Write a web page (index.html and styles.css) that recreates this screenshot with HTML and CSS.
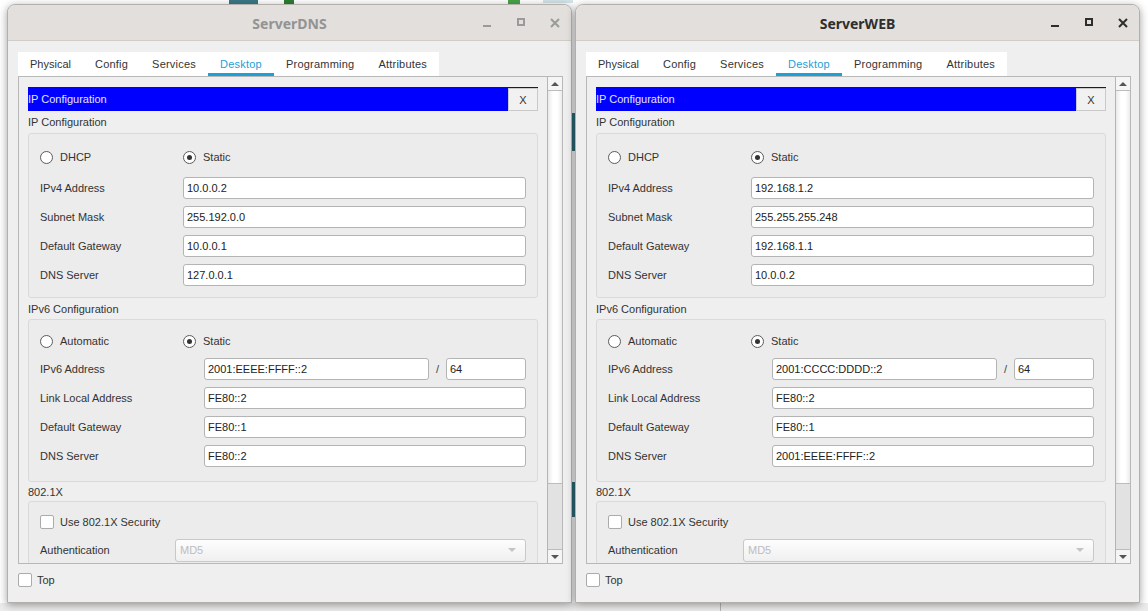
FILE: index.html
```html
<!DOCTYPE html>
<html>
<head>
<meta charset="utf-8">
<link rel="stylesheet" href="styles.css">
</head>
<body>
<div class="desk">
  <div class="bit b1"></div>
  <div class="bit b2"></div>
  <div class="bit b3"></div>
  <div class="bit b4"></div>
  <div class="bit b5"></div>
  <div class="bit b6"></div>
  <div class="bottom-strip"><div class="strip-line"></div></div>
</div>

<div class="win win-l">
  <div class="titlebar">
    <span class="title">ServerDNS</span>
    <div class="ctrls">
      <svg class="ctl" width="16" height="16" viewBox="0 0 16 16"><path d="M4 11h8" stroke="currentColor" stroke-width="2"/></svg>
      <svg class="ctl" width="16" height="16" viewBox="0 0 16 16"><rect x="5" y="4" width="6" height="6" fill="none" stroke="currentColor" stroke-width="2"/></svg>
      <svg class="ctl" width="16" height="16" viewBox="0 0 16 16"><path d="M4 4l8 8M12 4l-8 8" stroke="currentColor" stroke-width="2"/></svg>
    </div>
  </div>
  <div class="wbody">
    <div class="tabs">
      <span class="tab">Physical</span>
      <span class="tab">Config</span>
      <span class="tab">Services</span>
      <span class="tab active">Desktop</span>
      <span class="tab">Programming</span>
      <span class="tab">Attributes</span>
    </div>
    <div class="panel">
      <div class="scroll">
        <div class="bar"><span>IP Configuration</span><span class="bar-x">X</span></div>
        <div class="sec">IP Configuration</div>
        <div class="box box1">
          <div class="radios">
            <span class="opt"><span class="rad"></span>DHCP</span>
            <span class="opt"><span class="rad on"></span>Static</span>
          </div>
          <div class="row first"><span class="lbl">IPv4 Address</span><span class="inp">10.0.0.2</span></div>
          <div class="row"><span class="lbl">Subnet Mask</span><span class="inp">255.192.0.0</span></div>
          <div class="row"><span class="lbl">Default Gateway</span><span class="inp">10.0.0.1</span></div>
          <div class="row"><span class="lbl">DNS Server</span><span class="inp">127.0.0.1</span></div>
        </div>
        <div class="sec">IPv6 Configuration</div>
        <div class="box box2">
          <div class="radios">
            <span class="opt"><span class="rad"></span>Automatic</span>
            <span class="opt"><span class="rad on"></span>Static</span>
          </div>
          <div class="row first"><span class="lbl">IPv6 Address</span><span class="inp addr">2001:EEEE:FFFF::2</span><span class="slash">/</span><span class="inp pref">64</span></div>
          <div class="row"><span class="lbl">Link Local Address</span><span class="inp">FE80::2</span></div>
          <div class="row"><span class="lbl">Default Gateway</span><span class="inp">FE80::1</span></div>
          <div class="row"><span class="lbl">DNS Server</span><span class="inp">FE80::2</span></div>
        </div>
        <div class="sec sec3">802.1X</div>
        <div class="box box3">
          <div class="chkrow"><span class="chk"></span>Use 802.1X Security</div>
          <div class="row first"><span class="lbl">Authentication</span><span class="sel"><span>MD5</span><span class="sel-arrow"></span></span></div>
        </div>
      </div>
      <div class="sbar">
        <div class="sb-btn"><span class="tri-up"></span></div>
        <div class="sb-thumb"></div>
        <div class="sb-track"></div>
        <div class="sb-btn down"><span class="tri-down"></span></div>
      </div>
    </div>
    <div class="foot"><span class="chk"></span>Top</div>
  </div>
</div>

<div class="win win-r">
  <div class="titlebar">
    <span class="title">ServerWEB</span>
    <div class="ctrls">
      <svg class="ctl" width="16" height="16" viewBox="0 0 16 16"><path d="M4 11h8" stroke="currentColor" stroke-width="2"/></svg>
      <svg class="ctl" width="16" height="16" viewBox="0 0 16 16"><rect x="5" y="4" width="6" height="6" fill="none" stroke="currentColor" stroke-width="2"/></svg>
      <svg class="ctl" width="16" height="16" viewBox="0 0 16 16"><path d="M4 4l8 8M12 4l-8 8" stroke="currentColor" stroke-width="2"/></svg>
    </div>
  </div>
  <div class="wbody">
    <div class="tabs">
      <span class="tab">Physical</span>
      <span class="tab">Config</span>
      <span class="tab">Services</span>
      <span class="tab active">Desktop</span>
      <span class="tab">Programming</span>
      <span class="tab">Attributes</span>
    </div>
    <div class="panel">
      <div class="scroll">
        <div class="bar"><span>IP Configuration</span><span class="bar-x">X</span></div>
        <div class="sec">IP Configuration</div>
        <div class="box box1">
          <div class="radios">
            <span class="opt"><span class="rad"></span>DHCP</span>
            <span class="opt"><span class="rad on"></span>Static</span>
          </div>
          <div class="row first"><span class="lbl">IPv4 Address</span><span class="inp">192.168.1.2</span></div>
          <div class="row"><span class="lbl">Subnet Mask</span><span class="inp">255.255.255.248</span></div>
          <div class="row"><span class="lbl">Default Gateway</span><span class="inp">192.168.1.1</span></div>
          <div class="row"><span class="lbl">DNS Server</span><span class="inp">10.0.0.2</span></div>
        </div>
        <div class="sec">IPv6 Configuration</div>
        <div class="box box2">
          <div class="radios">
            <span class="opt"><span class="rad"></span>Automatic</span>
            <span class="opt"><span class="rad on"></span>Static</span>
          </div>
          <div class="row first"><span class="lbl">IPv6 Address</span><span class="inp addr">2001:CCCC:DDDD::2</span><span class="slash">/</span><span class="inp pref">64</span></div>
          <div class="row"><span class="lbl">Link Local Address</span><span class="inp">FE80::2</span></div>
          <div class="row"><span class="lbl">Default Gateway</span><span class="inp">FE80::1</span></div>
          <div class="row"><span class="lbl">DNS Server</span><span class="inp">2001:EEEE:FFFF::2</span></div>
        </div>
        <div class="sec sec3">802.1X</div>
        <div class="box box3">
          <div class="chkrow"><span class="chk"></span>Use 802.1X Security</div>
          <div class="row first"><span class="lbl">Authentication</span><span class="sel"><span>MD5</span><span class="sel-arrow"></span></span></div>
        </div>
      </div>
      <div class="sbar">
        <div class="sb-btn"><span class="tri-up"></span></div>
        <div class="sb-thumb"></div>
        <div class="sb-track"></div>
        <div class="sb-btn down"><span class="tri-down"></span></div>
      </div>
    </div>
    <div class="foot"><span class="chk"></span>Top</div>
  </div>
</div>
</body>
</html>
```
FILE: styles.css
```css
* { box-sizing: border-box; margin: 0; padding: 0; }

body {
  width: 1148px;
  height: 611px;
  background: #ffffff;
  font-family: "Liberation Sans", Arial, sans-serif;
  font-size: 11px;
  color: #333;
  position: relative;
  overflow: hidden;
}

/* desktop behind the windows */
.desk { position: absolute; left: 0; top: 0; width: 1148px; height: 611px; }
.bit { position: absolute; }
.b1 { left: 229px; top: 0; width: 29px; height: 4px; background: #3b7886; }
.b2 { left: 284px; top: 0; width: 10px; height: 5px; background: #2e7d32; }
.b3 { left: 508px; top: 0; width: 12px; height: 6px; background: #46a347; }
.b4 { left: 543px; top: 0; width: 30px; height: 3px; background: #d3e3e8; }
.b5 { left: 571px; top: 113px; width: 4px; height: 38px; background: #2f6f7d; }
.b6 { left: 571px; top: 482px; width: 4px; height: 35px; background: #2f6f7d; }
.bottom-strip { position: absolute; left: 0; top: 603px; width: 1148px; height: 8px; background: #ececec; }
.strip-line { position: absolute; left: 720px; top: 0; width: 1px; height: 8px; background: #b5b5b5; }

/* windows */
.win {
  position: absolute;
  top: 4px;
  width: 565px;
  height: 599px;
  background: #efefef;
  border: 1px solid #b3b0ac;
  border-radius: 8px 8px 0 0;
  box-shadow: 0 2px 8px rgba(0, 0, 0, 0.38);
  display: flex;
  flex-direction: column;
  overflow: hidden;
}
.win-l { left: 7px; }
.win-r { left: 575px; }

.titlebar {
  height: 36px;
  flex: none;
  background: #e2dfdc;
  border-bottom: 1px solid #d0cdc8;
  display: flex;
  align-items: center;
  justify-content: center;
  position: relative;
}
.title {
  font-family: "Noto Sans", "DejaVu Sans", sans-serif;
  font-weight: 700;
  font-size: 14px;
  color: #939393;
  padding-top: 1px;
}
.win-r .title { color: #2e2e2e; }

.ctrls {
  position: absolute;
  right: 8px;
  top: 0;
  height: 100%;
  display: flex;
  align-items: center;
  gap: 18px;
  color: #9a9a9a;
}
.win-r .ctrls { color: #2e2e2e; }
.ctl { display: block; }

.wbody {
  flex: 1;
  display: flex;
  flex-direction: column;
  padding: 11px 8px 0 10px;
}

/* tabs */
.tabs {
  display: flex;
  align-self: flex-start;
  background: #fff;
  height: 24px;
}
.tab {
  padding: 0 12px;
  line-height: 24px;
  position: relative;
  color: #333;
  letter-spacing: 0.22px;
}
.tab:first-child { letter-spacing: 0; }
.tab.active { color: #22a0d6; }
.tab.active::after {
  content: "";
  position: absolute;
  left: 0;
  right: 0;
  bottom: 0;
  height: 3px;
  background: #1ba0d7;
}

/* main panel */
.panel {
  height: 488px;
  flex: none;
  border: 1px solid #b8b8b8;
  display: flex;
  background: #efefef;
}
.scroll {
  flex: 1;
  padding: 10px 9px 0 9px;
  overflow: hidden;
}

.bar {
  height: 24px;
  background: #0000ff;
  color: #e4e4ff;
  display: flex;
  align-items: center;
  justify-content: space-between;
}
.bar-x {
  width: 30px;
  height: 23px;
  align-self: flex-end;
  background: #f1f1f1;
  border: 1px solid #c9c9c9;
  display: flex;
  align-items: center;
  justify-content: center;
  color: #333;
}

.sec { height: 22px; line-height: 22px; }
.sec3 { height: 19px; line-height: 21px; }

.box {
  border: 1px solid #dadada;
  border-radius: 3px;
  background: #ececec;
}
.box1 { padding: 12px 11px 11px; }
.box2 { padding: 10px 11px 14px; margin-top: -1px; }
.box3 { padding: 9px 11px 4px; }

.radios { display: flex; align-items: center; height: 22px; }
.opt { display: flex; align-items: center; gap: 7px; width: 143px; }
.rad {
  width: 13px;
  height: 13px;
  border: 1px solid #5a5a5a;
  border-radius: 50%;
  background: #fff;
  position: relative;
  flex: none;
}
.rad.on::after {
  content: "";
  position: absolute;
  left: 3px;
  top: 3px;
  width: 5px;
  height: 5px;
  border-radius: 50%;
  background: #333;
}

.row { display: flex; align-items: center; height: 22px; margin-top: 7px; }
.box1 .row.first { margin-top: 9px; }
.box2 .row.first { margin-top: 6px; }
.box3 .row.first { margin-top: 6px; }

.lbl { width: 143px; flex: none; }
.box2 .lbl { width: 164px; }
.box3 .lbl { width: 135px; }

.inp {
  flex: 1;
  height: 22px;
  background: #fff;
  border: 1px solid #b4b4b4;
  border-radius: 3px;
  padding: 0 3px;
  line-height: 20px;
  color: #222;
}
.inp.addr { flex: none; width: 225px; }
.inp.pref { flex: none; width: 80px; }
.slash { width: 17px; text-align: center; color: #444; }

.chkrow { display: flex; align-items: center; gap: 6px; height: 22px; }
.chk {
  width: 14px;
  height: 14px;
  border: 1px solid #ababab;
  border-radius: 2px;
  background: #fff;
  flex: none;
}

.sel {
  flex: 1;
  height: 23px;
  border: 1px solid #c8c8c8;
  border-radius: 3px;
  background: linear-gradient(#fdfdfd, #f0f0f0);
  color: #bdbdbd;
  padding: 0 4px;
  display: flex;
  align-items: center;
  justify-content: space-between;
}
.sel-arrow {
  width: 0;
  height: 0;
  border-left: 4px solid transparent;
  border-right: 4px solid transparent;
  border-top: 4px solid #c4c4c4;
  margin-right: 5px;
}

/* scrollbar */
.sbar {
  width: 15px;
  flex: none;
  border-left: 1px solid #b4b4b4;
  display: flex;
  flex-direction: column;
}
.sb-btn {
  height: 14px;
  flex: none;
  background: #f5f5f5;
  border-bottom: 1px solid #bcbcbc;
  display: flex;
  align-items: center;
  justify-content: center;
}
.sb-btn.down { border-bottom: 0; border-top: 1px solid #bcbcbc; height: 14px; }
.tri-up, .tri-down {
  width: 0;
  height: 0;
  border-left: 4px solid transparent;
  border-right: 4px solid transparent;
}
.tri-up { border-bottom: 4px solid #555; }
.tri-down { border-top: 4px solid #555; }
.sb-thumb {
  height: 393px;
  flex: none;
  background: linear-gradient(90deg, #e9e9e9, #ffffff 35%, #ffffff 65%, #ececec);
  border-bottom: 1px solid #bcbcbc;
}
.sb-track { flex: 1; background: #e2e2e2; }

/* footer */
.foot {
  display: flex;
  align-items: center;
  gap: 5px;
  height: 14px;
  margin-top: 9px;
}
```
